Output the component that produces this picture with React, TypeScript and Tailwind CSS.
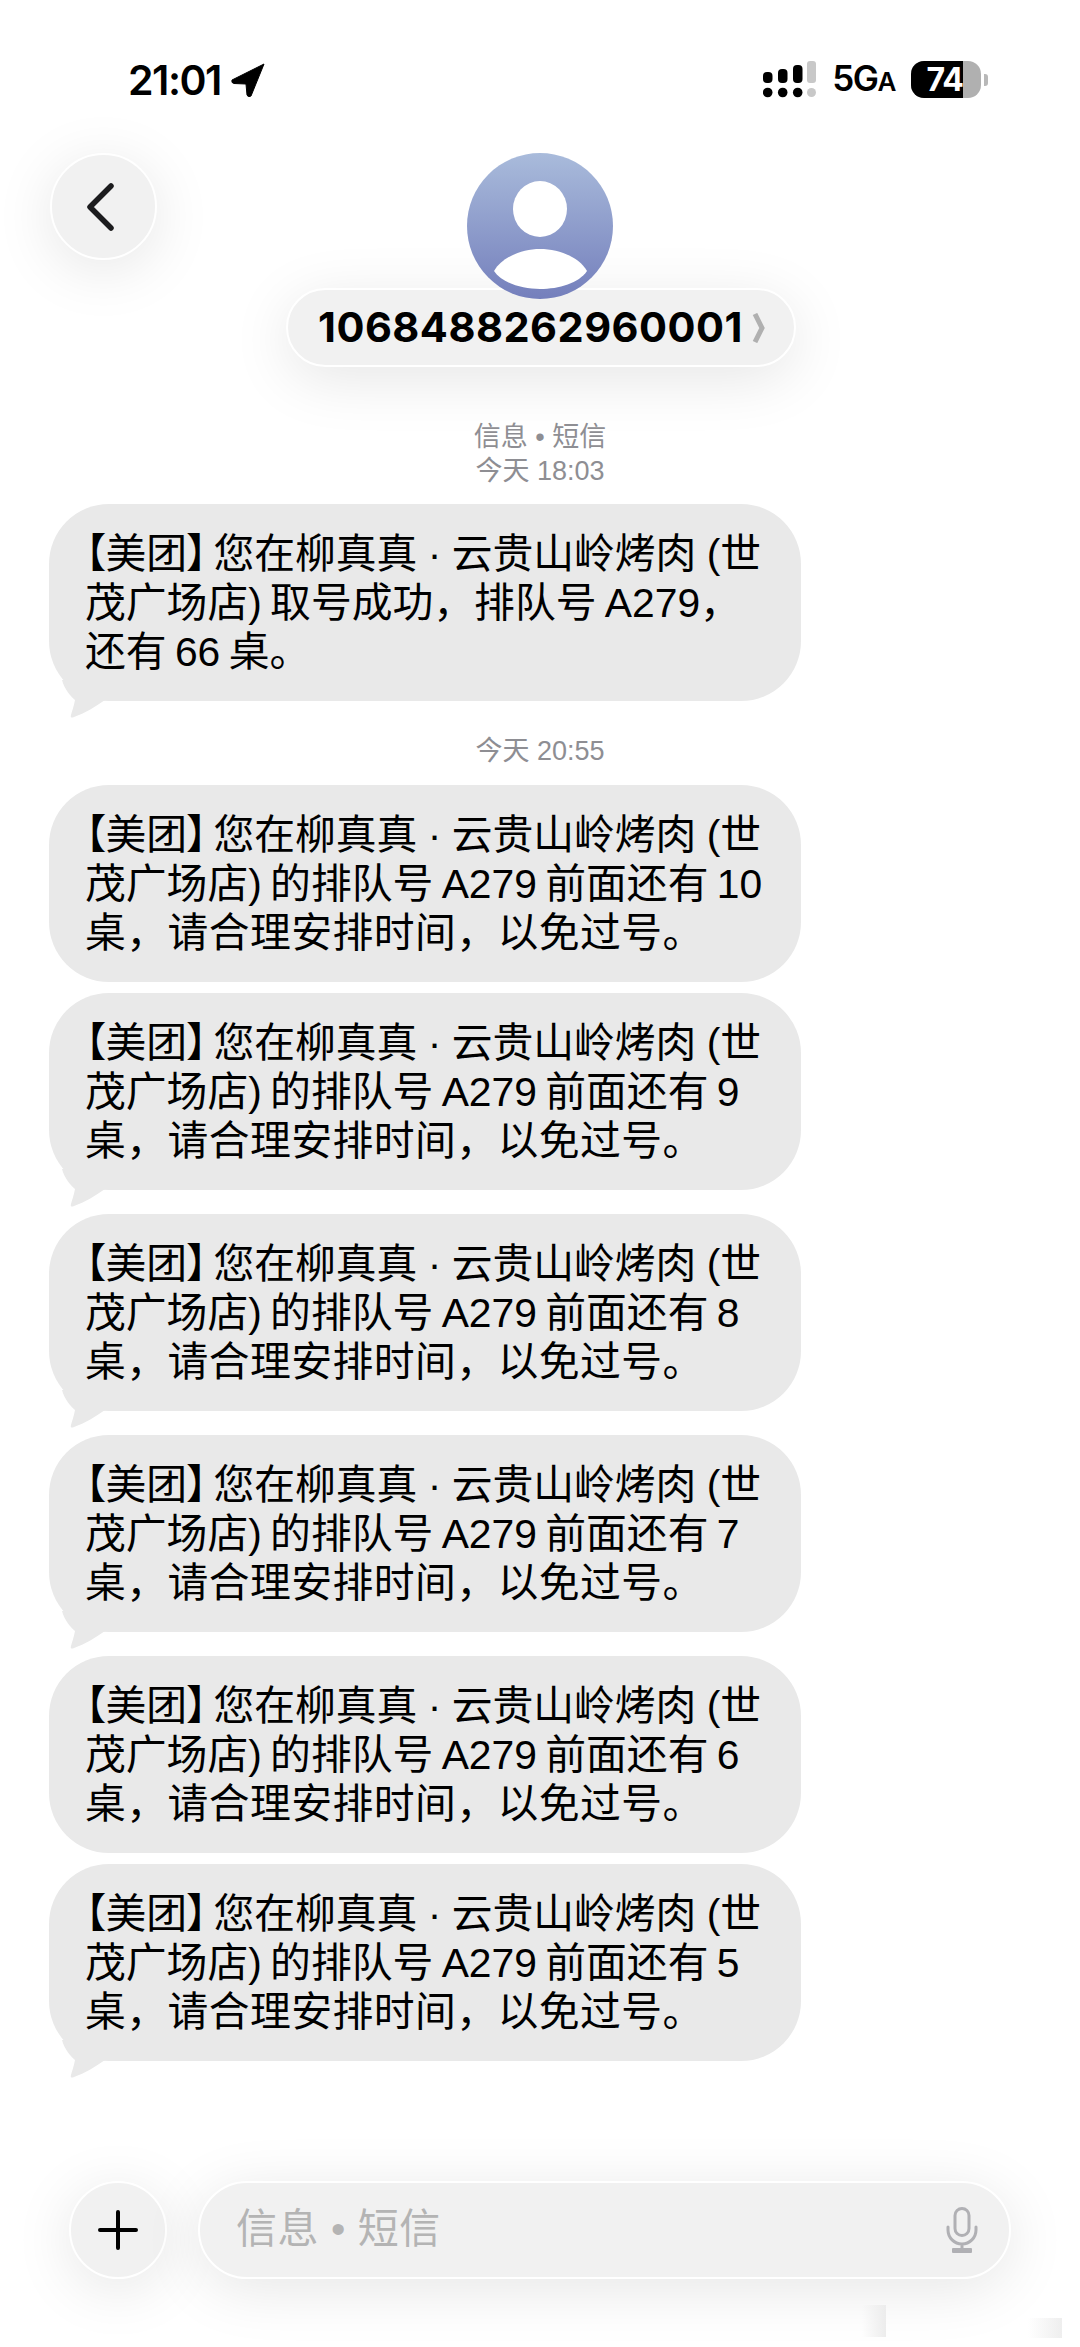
import React from "react";

const cjk = "font-['Liberation_Sans','Noto_Sans_CJK_SC',sans-serif]";

const MESSAGES = [
  { left: "10", tail: false },
  { left: "9", tail: true },
  { left: "8", tail: true },
  { left: "7", tail: true },
  { left: "6", tail: false },
  { left: "5", tail: true },
];

// first line is the same in every message
const HEAD = (
  <span className="[word-spacing:-1px]">
    <span className="[font-feature-settings:'palt'] mr-[6px]">【美团】</span>您在柳真真 · 云贵山岭烤肉 (世
  </span>
);

function Bubble({ lines, tail, className }: { lines: React.ReactNode[]; tail?: boolean; className?: string }) {
  return (
    <div className={`relative w-[752px] h-[197px] ml-[49px] bg-[#e9e9e9] rounded-[60px] pl-[36px] pt-[26px] ${className ?? ""}`}>
      {lines.map((l, i) => (
        <div key={i} className="h-[49px] leading-[49px] text-[40.8px] text-black whitespace-pre [word-spacing:-3px]">
          {l}
        </div>
      ))}
      {tail && (
        <svg className="absolute left-[10px] bottom-[-19px]" width="50" height="40" viewBox="0 0 50 40">
          <path d="M3 0 C5 8 11 16 16 20 C15 26 13 31 12 35 C11 38 13 38 15 37 C26 33 36 27 46 20 L46 0 Z" fill="#e9e9e9" />
        </svg>
      )}
    </div>
  );
}

export default function App() {
  return (
    <div className={`relative w-[1080px] h-[2347px] bg-white overflow-hidden ${cjk}`}>
      {/* Status bar */}
      <div className="flex items-center justify-between h-[37px] mt-[61px] pl-[128px] pr-[92px] absolute top-0 left-0 right-0">
        <div className="flex items-center gap-[10px]">
          <span className="font-['Inter'] font-semibold text-[41px] leading-[36px] tracking-[-1.5px] text-black">21:01</span>
          <svg width="34" height="34" viewBox="0 0 34 34">
            <path d="M33 1 L1 17 Q0 20 3 20.5 L15 21 L16 32 Q17 35 20 33 Z" fill="#000" stroke="#000" strokeWidth="1" strokeLinejoin="round" />
          </svg>
        </div>
        <div className="flex items-center">
          <svg width="53" height="37" viewBox="0 0 53 37" className="mr-[16px]">
            <rect x="0" y="11" width="9.5" height="11" rx="4" fill="#000" />
            <rect x="15" y="8" width="9.5" height="14" rx="4" fill="#000" />
            <rect x="30" y="4" width="9.5" height="18" rx="4" fill="#000" />
            <rect x="44" y="0" width="9" height="22" rx="3" fill="#c8c8c8" />
            <circle cx="4.7" cy="31.5" r="4.8" fill="#000" />
            <circle cx="19.7" cy="31.5" r="4.8" fill="#000" />
            <circle cx="34.7" cy="31.5" r="4.8" fill="#000" />
            <circle cx="48.5" cy="31.5" r="4.5" fill="#c8c8c8" />
          </svg>
          <span className="font-['Inter'] font-semibold text-[35px] leading-[36px] tracking-[-1.5px] text-black">
            5G<span className="text-[26px]">A</span>
          </span>
          <div className="flex ml-[16px] w-[70px] h-[37px] rounded-[13px] overflow-hidden bg-[#b0b0b0]">
            <div className="w-[52px] h-full bg-black text-white text-right font-['Inter'] font-bold text-[32px] leading-[37px] tracking-[-1px] whitespace-nowrap">
              74
            </div>
          </div>
          <div className="w-[4px] h-[12px] ml-[3px] rounded-r-[3px] bg-[#b8b8b8]" />
        </div>
      </div>

      {/* Header */}
      <div className="relative h-[435px]">
        <div className="absolute left-[50px] top-[153px] w-[107px] h-[107px] rounded-full bg-[#f1f1f1] border-2 border-white shadow-[0_10px_60px_rgba(0,0,0,0.10)] flex items-center justify-center">
          <svg width="36" height="50" viewBox="0 0 36 50" className="mr-[6px]">
            <path d="M28 4 L7 25 L28 46" fill="none" stroke="#1c1c1e" strokeWidth="5.5" strokeLinecap="round" strokeLinejoin="round" />
          </svg>
        </div>
        <div className="absolute left-[286px] top-[288px] w-[510px] h-[79px] rounded-full bg-[#f1f1f1] border-2 border-white shadow-[0_12px_60px_rgba(0,0,0,0.10)] flex items-center pl-[30px]">
          <span className="font-['Inter'] font-bold text-[41.5px] leading-none tracking-[0.5px] text-black">1068488262960001</span>
          <svg width="14" height="30" viewBox="0 0 14 30" className="ml-[9px]">
            <path d="M3 1 L10 15 L3 29" fill="none" stroke="#b0b0b0" strokeWidth="5" />
          </svg>
        </div>
        <svg className="absolute left-[467px] top-[153px]" width="146" height="146" viewBox="0 0 146 146">
          <defs>
            <linearGradient id="avatar" x1="0" y1="0" x2="0" y2="1">
              <stop offset="0" stopColor="#a9bbdb" />
              <stop offset="1" stopColor="#747fbc" />
            </linearGradient>
          </defs>
          <circle cx="73" cy="73" r="73" fill="url(#avatar)" />
          <ellipse cx="73" cy="56" rx="27" ry="28" fill="#fff" />
          <path d="M27 118 C35 104 55 96 73 96 C92 96 112 104 120 118 C112 130 92 136 73 136 C55 136 35 130 27 118 Z" fill="#fff" />
        </svg>
      </div>

      {/* Conversation */}
      <div className="text-center text-[27px] leading-[34px] text-[#8e8e93] h-[69px]">
        <div className="-translate-y-[15px]">信息 • 短信</div>
        <div className="-translate-y-[15px]">今天 18:03</div>
      </div>
      <Bubble
        lines={[HEAD, "茂广场店) 取号成功，排队号 A279，", "还有 66 桌。"]}
        tail
      />
      <div className="text-center text-[27px] leading-[34px] text-[#8e8e93] mt-[33px] mb-[17px]">今天 20:55</div>
      {MESSAGES.map((m) => (
        <Bubble
          key={m.left}
          tail={m.tail}
          className={m.tail ? "mb-[24px]" : "mb-[11px]"}
          lines={[
            HEAD,
            `茂广场店) 的排队号 A279 前面还有 ${m.left}`,
            <span className="tracking-[0.45px]">桌，请合理安排时间，以免过号。</span>,
          ]}
        />
      ))}

      {/* Composer */}
      <div className="absolute left-[69px] top-[2181px] flex gap-[31px]">
        <div className="w-[98px] h-[98px] rounded-full bg-[#f1f1f1] border-2 border-white shadow-[0_10px_60px_rgba(0,0,0,0.10)] flex items-center justify-center">
          <svg width="40" height="40" viewBox="0 0 40 40">
            <path d="M20 2 V38 M2 20 H38" stroke="#000" strokeWidth="4" strokeLinecap="round" />
          </svg>
        </div>
        <div className="w-[813px] h-[98px] rounded-full bg-[#f1f1f1] border-2 border-white shadow-[0_10px_60px_rgba(0,0,0,0.10)] flex items-center justify-between pl-[36px] pr-[30px]">
          <span className="text-[41px] tracking-[0.5px] text-[#b4b4b4]">信息 • 短信</span>
          <svg width="34" height="46" viewBox="0 0 34 46">
            <rect x="10" y="1.5" width="14" height="27" rx="7" fill="none" stroke="#b0b0b4" strokeWidth="3" />
            <path d="M3 20 V23 a14 14 0 0 0 28 0 V20 M17 37 V42" fill="none" stroke="#b0b0b4" strokeWidth="3" strokeLinecap="round" />
            <rect x="7" y="41" width="20" height="5" rx="1" fill="#b0b0b4" />
          </svg>
        </div>
      </div>

      {/* faint watermark smudge */}
      <div className="absolute left-[862px] top-[2305px] w-[24px] h-[32px] bg-gradient-to-l from-[#ececec] to-transparent" />
      <div className="absolute left-[1028px] top-[2318px] w-[34px] h-[20px] bg-gradient-to-r from-transparent to-[#eeeeee]" />
    </div>
  );
}
